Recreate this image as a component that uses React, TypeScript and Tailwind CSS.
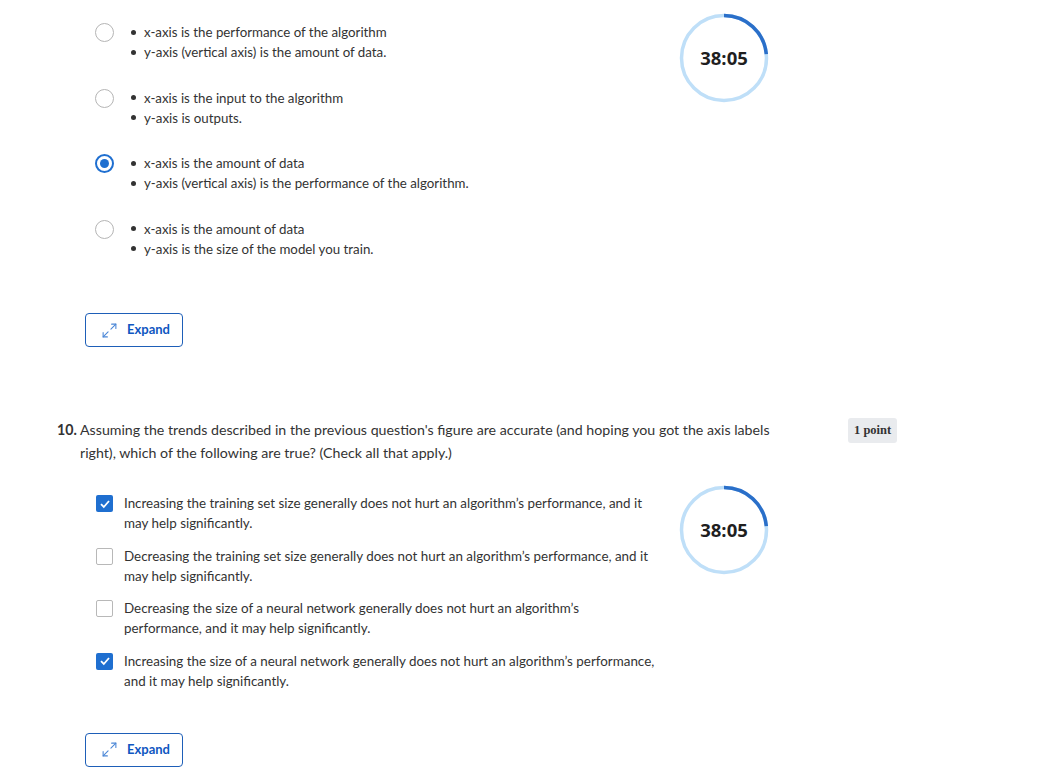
import { Maximize2 } from 'lucide-react'

const opcoes = [
  ['x-axis is the performance of the algorithm', 'y-axis (vertical axis) is the amount of data.'],
  ['x-axis is the input to the algorithm', 'y-axis is outputs.'],
  ['x-axis is the amount of data', 'y-axis (vertical axis) is the performance of the algorithm.'],
  ['x-axis is the amount of data', 'y-axis is the size of the model you train.'],
]

const marcar = [
  { texto: 'Increasing the training set size generally does not hurt an algorithm\u2019s performance, and it may help significantly.', ok: true },
  { texto: 'Decreasing the training set size generally does not hurt an algorithm\u2019s performance, and it may help significantly.', ok: false },
  { texto: 'Decreasing the size of a neural network generally does not hurt an algorithm\u2019s performance, and it may help significantly.', ok: false },
  { texto: 'Increasing the size of a neural network generally does not hurt an algorithm\u2019s performance, and it may help significantly.', ok: true },
]

function Timer() {
  const r = 42.5
  const c = 2 * Math.PI * r
  return (
    <div className="relative w-[90px] h-[90px]">
      <svg width="90" height="90" viewBox="0 0 90 90" className="absolute inset-0">
        <circle cx="45" cy="45" r={r} fill="none" stroke="#bfdff8" strokeWidth="3.5" />
        <circle cx="45" cy="45" r={r} fill="none" stroke="#2a6fc9" strokeWidth="3.5"
          strokeDasharray={`${c * 0.235} ${c}`} transform="rotate(-90 45 45)" />
      </svg>
      <div className="absolute inset-0 flex items-center justify-center text-[18.5px] font-bold text-[#1f1f1f] font-['Open_Sans',sans-serif]">
        38:05
      </div>
    </div>
  )
}

function BotaoExpandir() {
  return (
    <button className="flex items-center w-[98px] h-[34px] border border-[#1e5fb8] rounded-[4px] pl-[15px] gap-[9px] text-[#0f56c1] text-[13px] font-bold">
      <Maximize2 size={17} strokeWidth={1.5} className="text-[#4a86d6]" />
      Expand
    </button>
  )
}

export default function App() {
  return (
    <div className="relative w-[1050px] h-[784px] bg-white overflow-hidden font-['Lato',sans-serif] text-[#333]">
      <div className="absolute left-[679px] top-[13px]"><Timer /></div>
      <div className="absolute left-[679px] top-[485px]"><Timer /></div>

      <div className="pt-[22px] pl-[95px]">
        {opcoes.map((linhas, i) => (
          <div key={i} className="flex items-start mb-[25.5px]">
            {i === 2 ? (
              <div className="mt-[1px] w-[19px] h-[19px] rounded-full border-[2.5px] border-[#1f6fd0] flex items-center justify-center">
                <div className="w-[9px] h-[9px] rounded-full bg-[#1f6fd0]" />
              </div>
            ) : (
              <div className="mt-[1px] w-[19px] h-[19px] rounded-full border-[1.5px] border-[#b5b5b5]" />
            )}
            <ul className="ml-[17px] text-[13.3px] leading-[20px] text-[#333]">
              {linhas.map((l, j) => (
                <li key={j} className="flex items-center">
                  <span className="w-[5px] h-[5px] rounded-full bg-[#333] mr-[8px]" />
                  {l}
                </li>
              ))}
            </ul>
          </div>
        ))}
        <div className="pt-[29px] -ml-[10px]">
          <BotaoExpandir />
        </div>
      </div>

      <div className="mt-[71px] pl-[57px] flex items-start">
        <div className="flex w-[740px] text-[14.2px] leading-[23px] text-[#333]">
          <span className="w-[23px] shrink-0 font-bold">10.</span>
          <p>Assuming the trends described in the previous question's figure are accurate (and hoping you got the axis labels right), which of the following are true? (Check all that apply.)</p>
        </div>
        <span className="ml-[51px] h-[25px] px-[6px] flex items-center rounded-[3px] bg-[#e9ebee] text-[12.5px] font-bold text-[#333] font-['Liberation_Serif',serif]">
          1 point
        </span>
      </div>

      <div className="mt-[29px] pl-[96px] flex flex-col gap-[12.5px]">
        {marcar.map((m, i) => (
          <div key={i} className="flex items-start">
            {m.ok ? (
              <div className="mt-[2px] w-[17px] h-[17px] rounded-[2px] bg-[#1f6fd0] flex items-center justify-center shrink-0">
                <svg width="12" height="12" viewBox="0 0 12 12"><path d="M2 6.2 L4.8 9 L10 3" fill="none" stroke="white" strokeWidth="1.8" /></svg>
              </div>
            ) : (
              <div className="mt-[2px] w-[17px] h-[17px] rounded-[2px] border-[1.5px] border-[#b8b8b8] shrink-0" />
            )}
            <p className="ml-[11px] w-[532px] text-[13.4px] leading-[20px] text-[#333]">{m.texto}</p>
          </div>
        ))}
      </div>

      <div className="mt-[42px] pl-[85px]">
        <BotaoExpandir />
      </div>
    </div>
  )
}
